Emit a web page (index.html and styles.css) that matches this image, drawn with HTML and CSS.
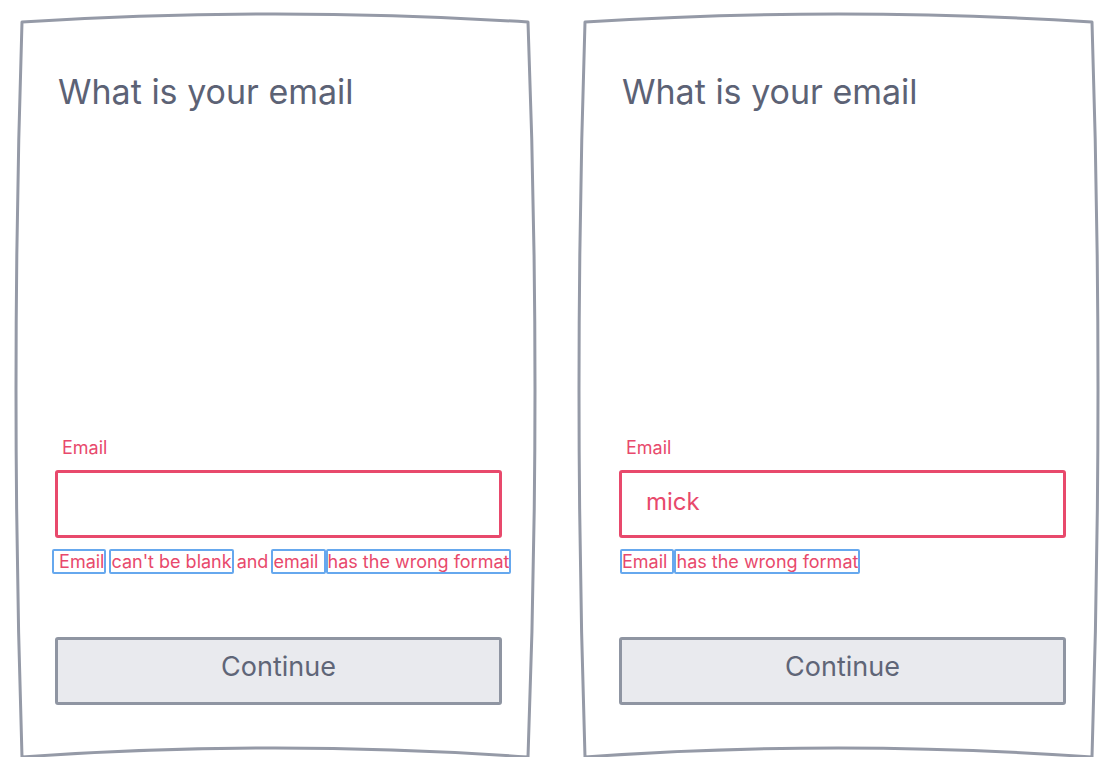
FILE: index.html
```html
<!DOCTYPE html>
<html lang="en">
<head>
<meta charset="utf-8">
<title>Email form errors</title>
<link rel="stylesheet" href="styles.css">
</head>
<body>
  <div class="screens">
    <section class="phone phone-a">
      <svg class="sketch" viewBox="0 0 506 735" preserveAspectRatio="none" aria-hidden="true">
        <path d="M0,0 Q253,-16 506,0 Q520,367 506,735 Q253,717 0,735 Q-12,367 0,0 Z"/>
      </svg>
      <h1 class="title">What is your email</h1>
      <div class="spacer"></div>
      <label class="label">Email</label>
      <input class="field" type="text" value="">
      <p class="errors errors-a"><span class="tok">&nbsp;Email</span><span class="tok tok-gap">can't be blank</span><span class="conj">and</span><span class="tok">email </span><span class="tok">has the wrong format</span></p>
      <button class="btn" type="button">Continue</button>
    </section>
    <section class="phone phone-b">
      <svg class="sketch" viewBox="0 0 507 735" preserveAspectRatio="none" aria-hidden="true">
        <path d="M0,0 Q253,-16 507,0 Q519,367 507,735 Q253,717 0,735 Q-12,367 0,0 Z"/>
      </svg>
      <h1 class="title">What is your email</h1>
      <div class="spacer"></div>
      <label class="label">Email</label>
      <input class="field" type="text" value="mick">
      <p class="errors errors-b"><span class="tok">Email </span><span class="tok">has the wrong format</span></p>
      <button class="btn" type="button">Continue</button>
    </section>
  </div>
</body>
</html>
```
FILE: styles.css
```css
* { box-sizing: border-box; }

html, body {
  margin: 0;
  background: #ffffff;
}

body {
  font-family: Inter, "Noto Sans", "Liberation Sans", sans-serif;
}

.screens {
  display: flex;
  gap: 57px;
  padding: 22px 0 0 22px;
}

.phone {
  position: relative;
  width: 506px;
  height: 735px;
  display: flex;
  flex-direction: column;
  padding: 49px 0 52px 33px;
}

.phone-b {
  width: 507px;
  padding-left: 34px;
}

.sketch {
  position: absolute;
  left: 0;
  top: 0;
  width: 100%;
  height: 100%;
  overflow: visible;
  pointer-events: none;
}

.sketch path {
  fill: none;
  stroke: #959aa7;
  stroke-width: 3;
  stroke-linejoin: round;
  vector-effect: non-scaling-stroke;
}

.title {
  margin: 0 0 0 3px;
  font-size: 34px;
  line-height: 41px;
  font-weight: 400;
  color: #5c6275;
}

.spacer {
  flex: 1;
}

.label {
  display: block;
  margin-left: 7px;
  font-size: 18px;
  line-height: 24px;
  color: #e8496c;
}

.field {
  display: block;
  width: 447px;
  height: 68px;
  margin-top: 10px;
  padding: 0 0 6px 24px;
  border: 3px solid #e8496c;
  border-radius: 3px;
  background: #fff;
  font-family: inherit;
  font-size: 24px;
  color: #e8496c;
  outline: none;
}

.errors {
  margin: 14px 0 0 -3px;
  font-size: 18px;
  line-height: 20px;
  color: #e8496c;
  white-space: nowrap;
}

.errors-b {
  margin-left: 1px;
}

.tok {
  border: 2px solid #66a8ee;
  border-radius: 2px;
}

.tok-gap {
  margin-left: 3px;
}

.conj {
  margin: 0 3px;
}

.btn {
  display: block;
  width: 447px;
  height: 68px;
  margin-top: 65px;
  padding: 0 0 10px;
  border: 3px solid #8f95a2;
  border-radius: 3px;
  background: #e9eaee;
  font-family: inherit;
  font-size: 27px;
  color: #5f6577;
}
```
